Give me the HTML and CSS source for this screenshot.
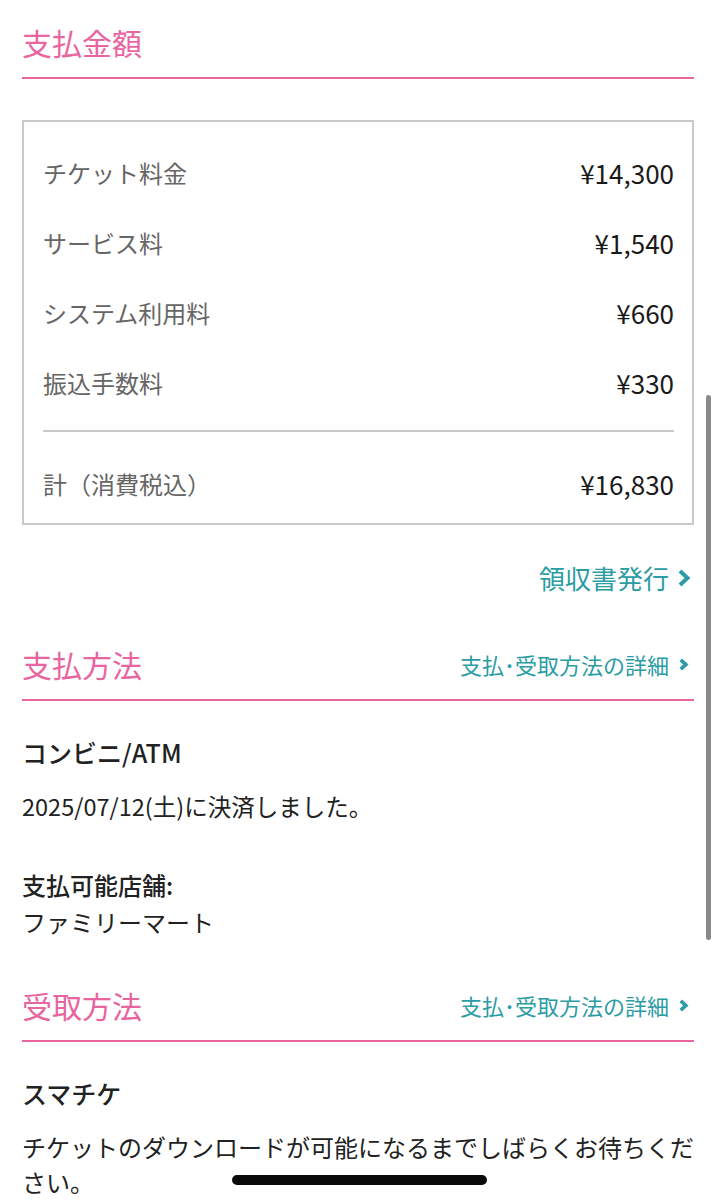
FILE: index.html
```html
<!DOCTYPE html>
<html lang="ja">
<head>
    <meta charset="UTF-8">
    <meta name="viewport" content="width=device-width, initial-scale=1.0">
    <title>支払金額</title>
    <link rel="stylesheet" href="styles.css">
</head>
<body>
    <div class="page">
        <div class="section-head">
            <h2 class="section-title">支払金額</h2>
        </div>

        <div class="price-box">
            <div class="price-row">
                <span class="price-label">チケット料金</span>
                <span class="price-value">¥14,300</span>
            </div>
            <div class="price-row">
                <span class="price-label">サービス料</span>
                <span class="price-value">¥1,540</span>
            </div>
            <div class="price-row">
                <span class="price-label">システム利用料</span>
                <span class="price-value">¥660</span>
            </div>
            <div class="price-row">
                <span class="price-label">振込手数料</span>
                <span class="price-value">¥330</span>
            </div>
            <div class="price-divider"></div>
            <div class="price-row">
                <span class="price-label">計（消費税込）</span>
                <span class="price-value">¥16,830</span>
            </div>
        </div>

        <div class="receipt">
            <a class="link link-large" href="#">領収書発行
                <svg class="chevron" viewBox="0 0 14 20" width="14" height="20"><path d="M3 3 L10.5 10 L3 17" fill="none" stroke="currentColor" stroke-width="4"/></svg>
            </a>
        </div>

        <div class="section-head section-gap">
            <h2 class="section-title">支払方法</h2>
            <a class="link" href="#">支払･受取方法の詳細
                <svg class="chevron" viewBox="0 0 12 16" width="11" height="15"><path d="M3 3 L8.5 8 L3 13" fill="none" stroke="currentColor" stroke-width="4"/></svg>
            </a>
        </div>

        <div class="method">
            <p class="method-name">コンビニ/ATM</p>
            <p class="method-text">2025/07/12(土)に決済しました。</p>
            <p class="store-label">支払可能店舗:</p>
            <p class="store-name">ファミリーマート</p>
        </div>

        <div class="section-head section-gap-2">
            <h2 class="section-title">受取方法</h2>
            <a class="link" href="#">支払･受取方法の詳細
                <svg class="chevron" viewBox="0 0 12 16" width="11" height="15"><path d="M3 3 L8.5 8 L3 13" fill="none" stroke="currentColor" stroke-width="4"/></svg>
            </a>
        </div>

        <div class="method">
            <p class="method-name">スマチケ</p>
            <p class="method-text long">チケットのダウンロードが可能になるまでしばらくお待ちください。</p>
        </div>
    </div>

    <div class="scrollbar"></div>
    <div class="home-bar"></div>
</body>
</html>
```

FILE: styles.css
```css
* {
    margin: 0;
    padding: 0;
    box-sizing: border-box;
}
body {
    background-color: #fff;
    font-family: "Noto Sans CJK JP", "Noto Sans", sans-serif;
    color: #222;
    overflow: hidden;
}
.page {
    padding: 22px 23px 0 22px;
}
.section-head {
    display: flex;
    justify-content: space-between;
    align-items: center;
    border-bottom: 2px solid #e8659f;
    padding-bottom: 15px;
}
.section-title {
    font-size: 30px;
    line-height: 40px;
    font-weight: 400;
    color: #e8659f;
}
.section-gap {
    margin-top: 48px;
}
.section-gap-2 {
    margin-top: 44px;
}
.link {
    color: #2b9ca4;
    text-decoration: none;
    font-size: 22px;
    line-height: 36px;
    display: flex;
    align-items: center;
    gap: 9px;
    padding-right: 5px;
}
.link-large {
    font-size: 26px;
    gap: 8px;
    padding-right: 3px;
}
.chevron {
    display: block;
}
.price-box {
    margin-top: 41px;
    border: 2px solid #c9c9c9;
    padding: 15px 18px 5px 19px;
}
.price-row {
    display: flex;
    justify-content: space-between;
    align-items: center;
    height: 70px;
}
.price-label {
    font-size: 24px;
    color: #666;
}
.price-value {
    font-size: 26px;
    color: #1a1a1a;
}
.price-divider {
    height: 2px;
    background-color: #c9c9c9;
    margin: 13px 0 16px;
}
.receipt {
    display: flex;
    justify-content: flex-end;
    margin-top: 35px;
}
.method {
    margin-top: 33px;
}
.method-name {
    font-size: 25px;
    line-height: 36px;
    font-weight: 500;
}
.method-text {
    font-size: 23.5px;
    line-height: 36px;
    margin-top: 18px;
}
.method-text.long {
    font-size: 24px;
    line-height: 35px;
}
.store-label {
    font-size: 24px;
    line-height: 36px;
    font-weight: 500;
    margin-top: 43px;
}
.store-name {
    font-size: 24px;
    line-height: 38px;
}
.scrollbar {
    position: fixed;
    top: 395px;
    right: 6px;
    width: 5px;
    height: 545px;
    border-radius: 3px;
    background-color: #8a8a8a;
}
.home-bar {
    position: fixed;
    top: 1175px;
    left: 232px;
    width: 255px;
    height: 10px;
    border-radius: 5px;
    background-color: #0a0a0a;
}
```
